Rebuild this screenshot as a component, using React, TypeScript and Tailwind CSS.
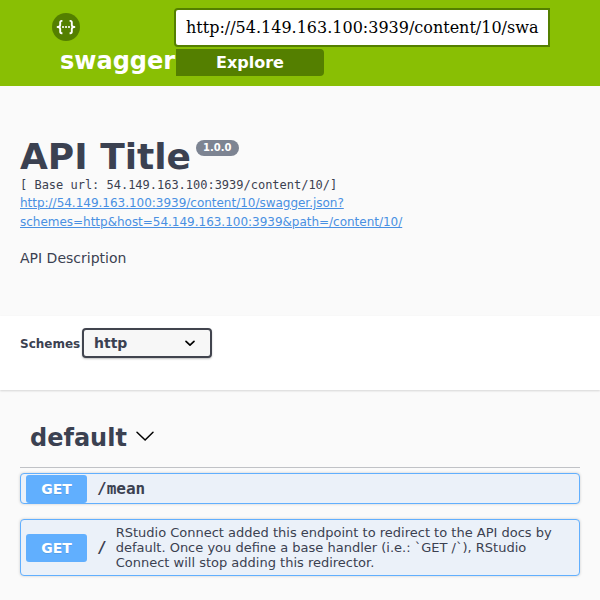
import React from "react";

const sans = "font-['DejaVu_Sans',sans-serif]";
const mono = "font-['DejaVu_Sans_Mono',monospace]";

function Logo() {
  return (
    <svg className="ml-[52px] block size-7" viewBox="0 0 28 28" fill="none">
      <circle cx="14" cy="14" r="14" fill="#547f00" />
      <g stroke="#fff" strokeWidth="1.9" strokeLinejoin="round">
        <path d="M10.4 7.9H9.7Q8.2 7.9 8.2 9.6V12Q8.2 14 5.6 14Q8.2 14 8.2 16V18.6Q8.2 20.3 9.7 20.3H10.4" />
        <path d="M17.6 7.9H18.3Q19.8 7.9 19.8 9.6V12Q19.8 14 22.4 14Q19.8 14 19.8 16V18.6Q19.8 20.3 18.3 20.3H17.6" />
      </g>
      <g fill="#fff">
        <circle cx="11" cy="14" r="1.1" />
        <circle cx="14" cy="14" r="1.1" />
        <circle cx="17" cy="14" r="1.1" />
      </g>
    </svg>
  );
}

function Topbar() {
  return (
    <header className="flex h-[86px] bg-[#89bf04]">
      <div className="w-[174px] shrink-0 pt-[13px]">
        <Logo />
        <div className="pl-[60px] pt-[4px] text-[24px] leading-[32px] font-bold whitespace-nowrap text-white">swagger</div>
      </div>
      <div className="pt-2">
        <div className="h-[39px] w-[376px] overflow-hidden rounded-l-[4px] border-2 border-[#547f00] bg-white px-[10px] font-['DejaVu_Serif',serif] text-[16px] leading-[35px] whitespace-nowrap text-black">
          http://54.149.163.100:3939/content/10/swa
        </div>
        <button className="mt-[2px] ml-[2px] block h-[27px] w-[148px] rounded-r-[4px] bg-[#547f00] text-center text-[16px] leading-[27px] font-bold text-white">
          Explore
        </button>
      </div>
    </header>
  );
}

function Info() {
  return (
    <section className="h-[230px] px-5 pt-[50px]">
      <h2 className="flex items-start text-[36px] leading-[42px] font-bold">
        API Title
        <span className="mt-[4px] ml-[5px] h-4 rounded-full bg-[#7d8492] px-[7px] text-[10px] leading-[15px] text-white">1.0.0</span>
      </h2>
      <pre className={`text-[12px] leading-[14px] tracking-[-0.015px] ${mono}`}>[ Base url: 54.149.163.100:3939/content/10/]</pre>
      <a className="mt-[2px] block text-[12px] leading-[19px] tracking-[-0.018px] text-[#4990e2] underline">
        http://54.149.163.100:3939/content/10/swagger.json?
        <br />
        schemes=http&amp;host=54.149.163.100:3939&amp;path=/content/10/
      </a>
      <p className="mt-[16px] text-[14px] leading-[20px]">API Description</p>
    </section>
  );
}

function Schemes() {
  return (
    <section className="flex h-[74px] items-start bg-white px-5 pt-3 shadow-[0_1px_2px_rgba(0,0,0,0.15)]">
      <span className="w-[62px] pt-[2px] text-[12px] leading-[28px] font-bold">Schemes</span>
      <div className="flex h-[30px] w-[130px] items-center justify-between rounded-[4px] border-2 border-[#41444e] bg-[#f7f7f7] pr-[10px] pl-[10px] text-[14px] font-bold shadow-[0_1px_2px_rgba(0,0,0,0.25)]">
        http
        <svg className="size-5" viewBox="0 0 20 20" fill="none" stroke="#000" strokeWidth="1.7" strokeLinecap="round" strokeLinejoin="round">
          <path d="M6 8.4L10 12.2L14 8.4" />
        </svg>
      </div>
    </section>
  );
}

function Operation({ path, text, size }: { path: string; text?: string; size: string }) {
  return (
    <div className={`flex items-center rounded-[4px] border border-[#61affe] bg-[#ebf1f9] px-[5px] shadow-[0_0_3px_rgba(0,0,0,0.19)] ${size}`}>
      <span className="h-7 w-[61px] shrink-0 rounded-[3px] bg-[#61affe] text-center text-[14px] leading-[28px] font-bold text-white [text-shadow:0_1px_0_rgba(0,0,0,0.1)]">GET</span>
      <span className={`ml-[10px] text-[16px] leading-5 font-bold ${mono}`}>{path}</span>
      {text && <span className="ml-[9px] w-[440px] text-[13px] leading-[15px]">{text}</span>}
    </div>
  );
}

export default function App() {
  return (
    <main className={`h-[600px] w-[600px] overflow-hidden bg-[#fafafa] text-[#3b4151] ${sans}`}>
      <Topbar />
      <Info />
      <Schemes />
      <section className="px-5 pt-[30px]">
        <h3 className="flex h-[48px] items-center border-b border-[#3b4151]/30 pb-[11px] pl-[10px] text-[24px] font-bold">
          default
          <svg className="ml-2 size-5" viewBox="0 0 20 20" fill="none" stroke="#000" strokeWidth="1.5" strokeLinecap="round">
            <path d="M2 4.2L10.1 12L18 4.2" />
          </svg>
        </h3>
        <Operation path="/mean" size="mt-[5px] h-[31px]" />
        <Operation
          path="/"
          size="mt-[15px] h-[57px]"
          text="RStudio Connect added this endpoint to redirect to the API docs by default. Once you define a base handler (i.e.: `GET /`), RStudio Connect will stop adding this redirector."
        />
      </section>
    </main>
  );
}
